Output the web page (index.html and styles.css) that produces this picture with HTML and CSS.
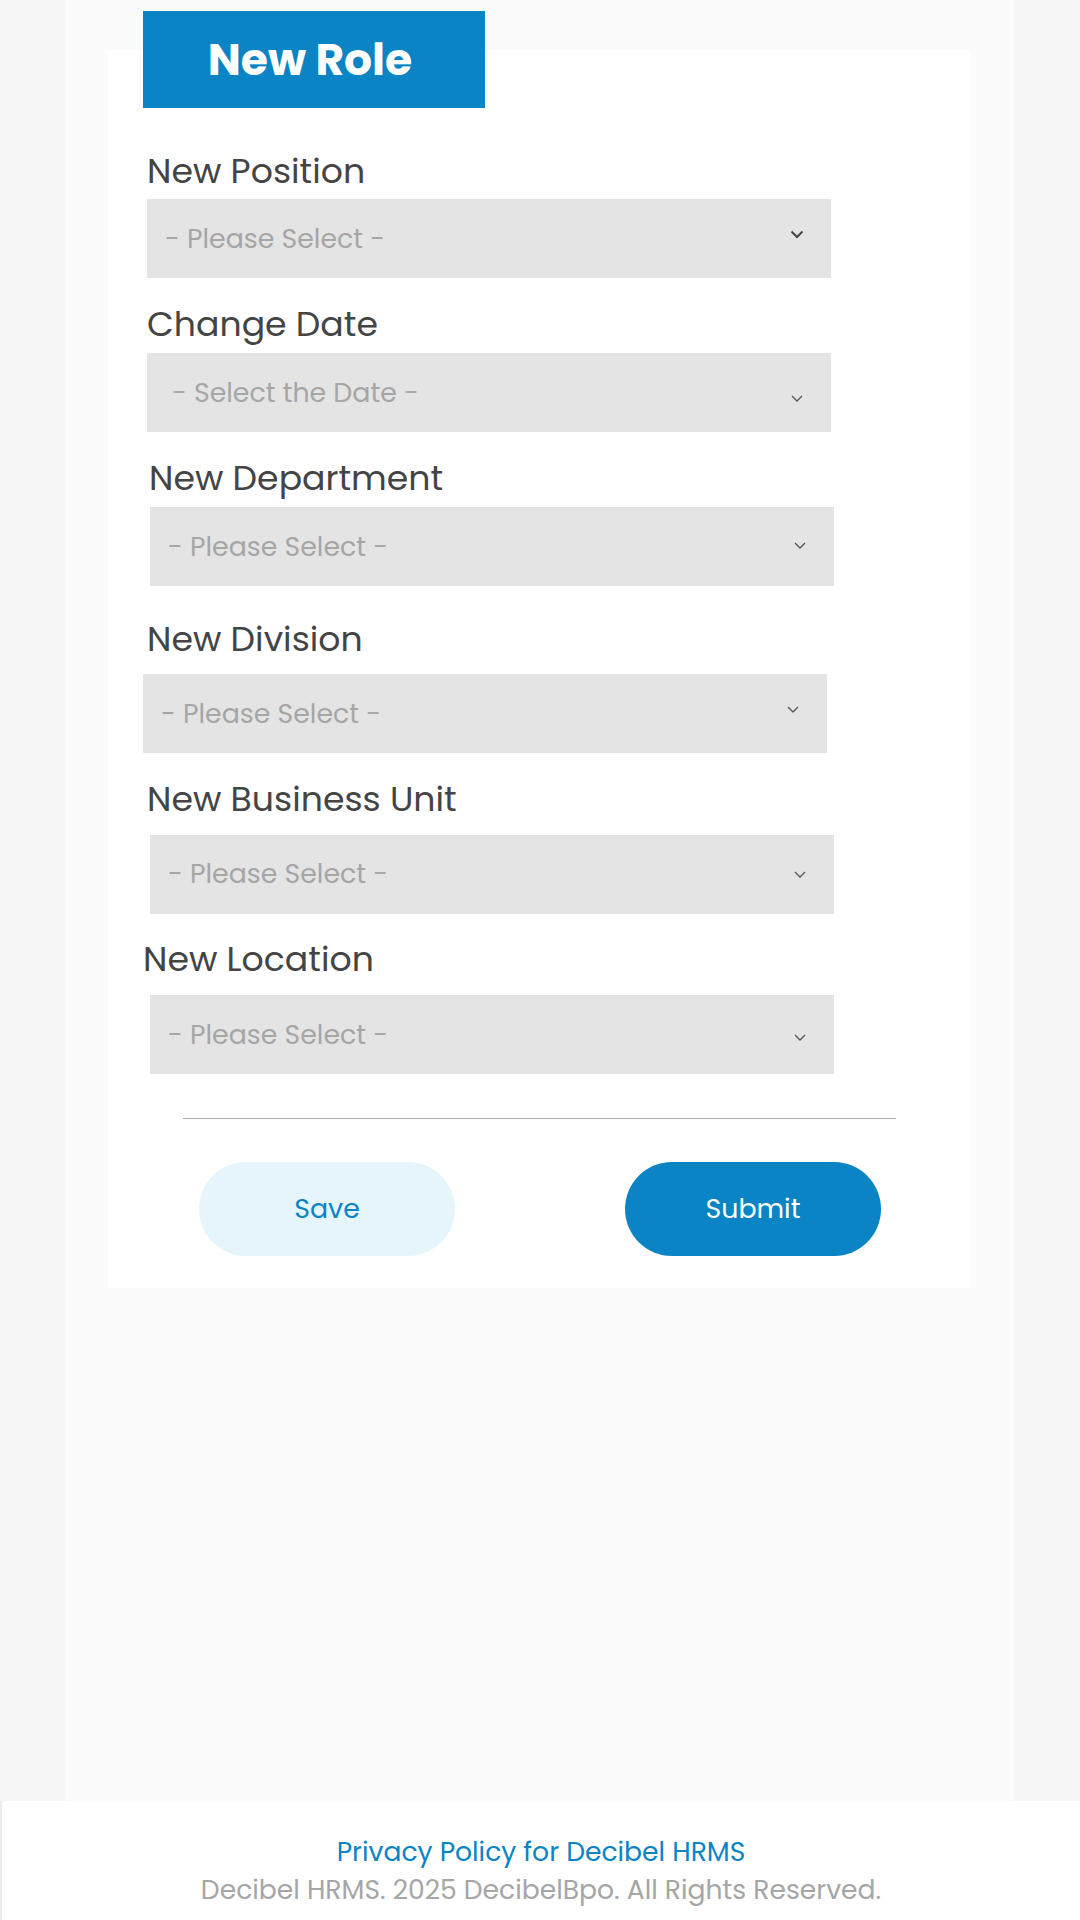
FILE: index.html
```html
<!DOCTYPE html>
<html lang="en">
<head>
<meta charset="utf-8">
<title>New Role</title>
<link rel="stylesheet" href="styles.css">
</head>
<body>
<main class="column">
  <section class="card">
    <h1 class="tab">New Role</h1>
    <form class="form">
      <div class="field">
        <label class="label">New Position</label>
        <div class="select"><span class="placeholder">- Please Select -</span><svg class="chev chev-bold" width="14" height="9" viewBox="0 0 14 9"><polyline points="1.5,1.5 7,7 12.5,1.5" fill="none" stroke="#444" stroke-width="2"/></svg></div>
      </div>
      <div class="field">
        <label class="label">Change Date</label>
        <div class="select"><span class="placeholder">- Select the Date -</span><svg class="chev" width="14" height="9" viewBox="0 0 14 9"><polyline points="2,2 7,7 12,2" fill="none" stroke="#555" stroke-width="1.3"/></svg></div>
      </div>
      <div class="field">
        <label class="label">New Department</label>
        <div class="select"><span class="placeholder">- Please Select -</span><svg class="chev" width="14" height="9" viewBox="0 0 14 9"><polyline points="2,2 7,7 12,2" fill="none" stroke="#555" stroke-width="1.3"/></svg></div>
      </div>
      <div class="field">
        <label class="label">New Division</label>
        <div class="select"><span class="placeholder">- Please Select -</span><svg class="chev" width="14" height="9" viewBox="0 0 14 9"><polyline points="2,2 7,7 12,2" fill="none" stroke="#555" stroke-width="1.3"/></svg></div>
      </div>
      <div class="field">
        <label class="label">New Business Unit</label>
        <div class="select"><span class="placeholder">- Please Select -</span><svg class="chev" width="14" height="9" viewBox="0 0 14 9"><polyline points="2,2 7,7 12,2" fill="none" stroke="#555" stroke-width="1.3"/></svg></div>
      </div>
      <div class="field">
        <label class="label">New Location</label>
        <div class="select"><span class="placeholder">- Please Select -</span><svg class="chev" width="14" height="9" viewBox="0 0 14 9"><polyline points="2,2 7,7 12,2" fill="none" stroke="#555" stroke-width="1.3"/></svg></div>
      </div>
    </form>
    <hr class="divider">
    <div class="actions">
      <button type="button" class="btn btn-save">Save</button>
      <button type="button" class="btn btn-submit">Submit</button>
    </div>
  </section>
</main>
<footer class="footer">
  <a class="footer-link" href="#">Privacy Policy for Decibel HRMS</a>
  <p class="footer-copy">Decibel HRMS. 2025 DecibelBpo. All Rights Reserved.</p>
</footer>
</body>
</html>
```
FILE: styles.css
```css
html, body {
  margin: 0;
  padding: 0;
}

body {
  background: #f7f7f7;
  font-family: "Poppins", "DejaVu Sans", sans-serif;
  width: 1080px;
}

.column {
  display: block;
  width: 949px;
  height: 1801px;
  margin-left: 65px;
  padding-top: 50px;
  box-sizing: border-box;
  background: #fbfbfb;
}

.card {
  margin: 0 43px;
  background: #ffffff;
  padding-bottom: 32px;
  display: flow-root;
}

.tab {
  margin: -39px 0 0 35px;
  width: 342px;
  height: 97px;
  background: #0a84c4;
  color: #ffffff;
  font-size: 44px;
  font-weight: bold;
  display: flex;
  align-items: center;
  justify-content: center;
  padding-right: 8px;
  box-sizing: border-box;
}

.form {
  margin: 0;
  padding-top: 42.6px;
  padding-left: 39px;
}

.field {
  margin-top: 25.5px;
}

.field:first-child {
  margin-top: 0;
}

.field:nth-child(4) {
  margin-top: 32.5px;
}

.label {
  display: block;
  font-size: 34.7px;
  line-height: 40px;
  color: #444444;
  margin-bottom: 16px;
}

.field:nth-child(1) .label { margin-bottom: 8.5px; }
.field:nth-child(2) .label,
.field:nth-child(3) .label { margin-bottom: 9.5px; }
.field:nth-child(4) .label { margin-bottom: 15.5px; }
.field:nth-child(3) .label { margin-left: 2px; }
.field:nth-child(6) .label { margin-left: -4px; }

.select {
  width: 684px;
  height: 79px;
  box-sizing: border-box;
  background: #e4e4e4;
  display: flex;
  align-items: center;
  justify-content: space-between;
  padding: 0 27px 0 18px;
}

.field:nth-child(2) .select { padding-left: 25px; }
.field:nth-child(3) .select,
.field:nth-child(5) .select,
.field:nth-child(6) .select { margin-left: 3px; }
.field:nth-child(4) .select { margin-left: -4px; }

.placeholder {
  font-size: 26.8px;
  color: #a6a6a6;
}

.chev {
  display: block;
  margin-top: -8px;
}

.field:nth-child(2) .chev { margin-top: 11px; }
.field:nth-child(3) .chev { margin-top: -3px; }
.field:nth-child(4) .chev { margin-top: -9px; }
.field:nth-child(5) .chev { margin-top: 0; }
.field:nth-child(6) .chev { margin-top: 5px; }

.divider {
  margin: 44px 0 0 75px;
  width: 713px;
  height: 0;
  border: 0;
  border-top: 1px solid #acacac;
}

.actions {
  display: flex;
  gap: 170px;
  margin-top: 43px;
  padding-left: 91px;
}

.btn {
  width: 256px;
  height: 94px;
  border: 0;
  border-radius: 47px;
  font-family: "Poppins", "DejaVu Sans", sans-serif;
  font-size: 26.8px;
  cursor: pointer;
}

.btn-save {
  background: #e6f5fc;
  color: #0a84c4;
}

.btn-submit {
  background: #0a84c4;
  color: #ffffff;
}

.footer {
  height: 119px;
  box-sizing: border-box;
  background: #ffffff;
  border-left: 2px solid #ececec;
  padding-top: 31.7px;
  text-align: center;
}

.footer-link {
  display: block;
  font-size: 26.6px;
  line-height: 38px;
  color: #0a84c4;
  text-decoration: none;
}

.footer-copy {
  margin: 0;
  font-size: 26.6px;
  line-height: 38px;
  color: #a6a6a6;
}
```
